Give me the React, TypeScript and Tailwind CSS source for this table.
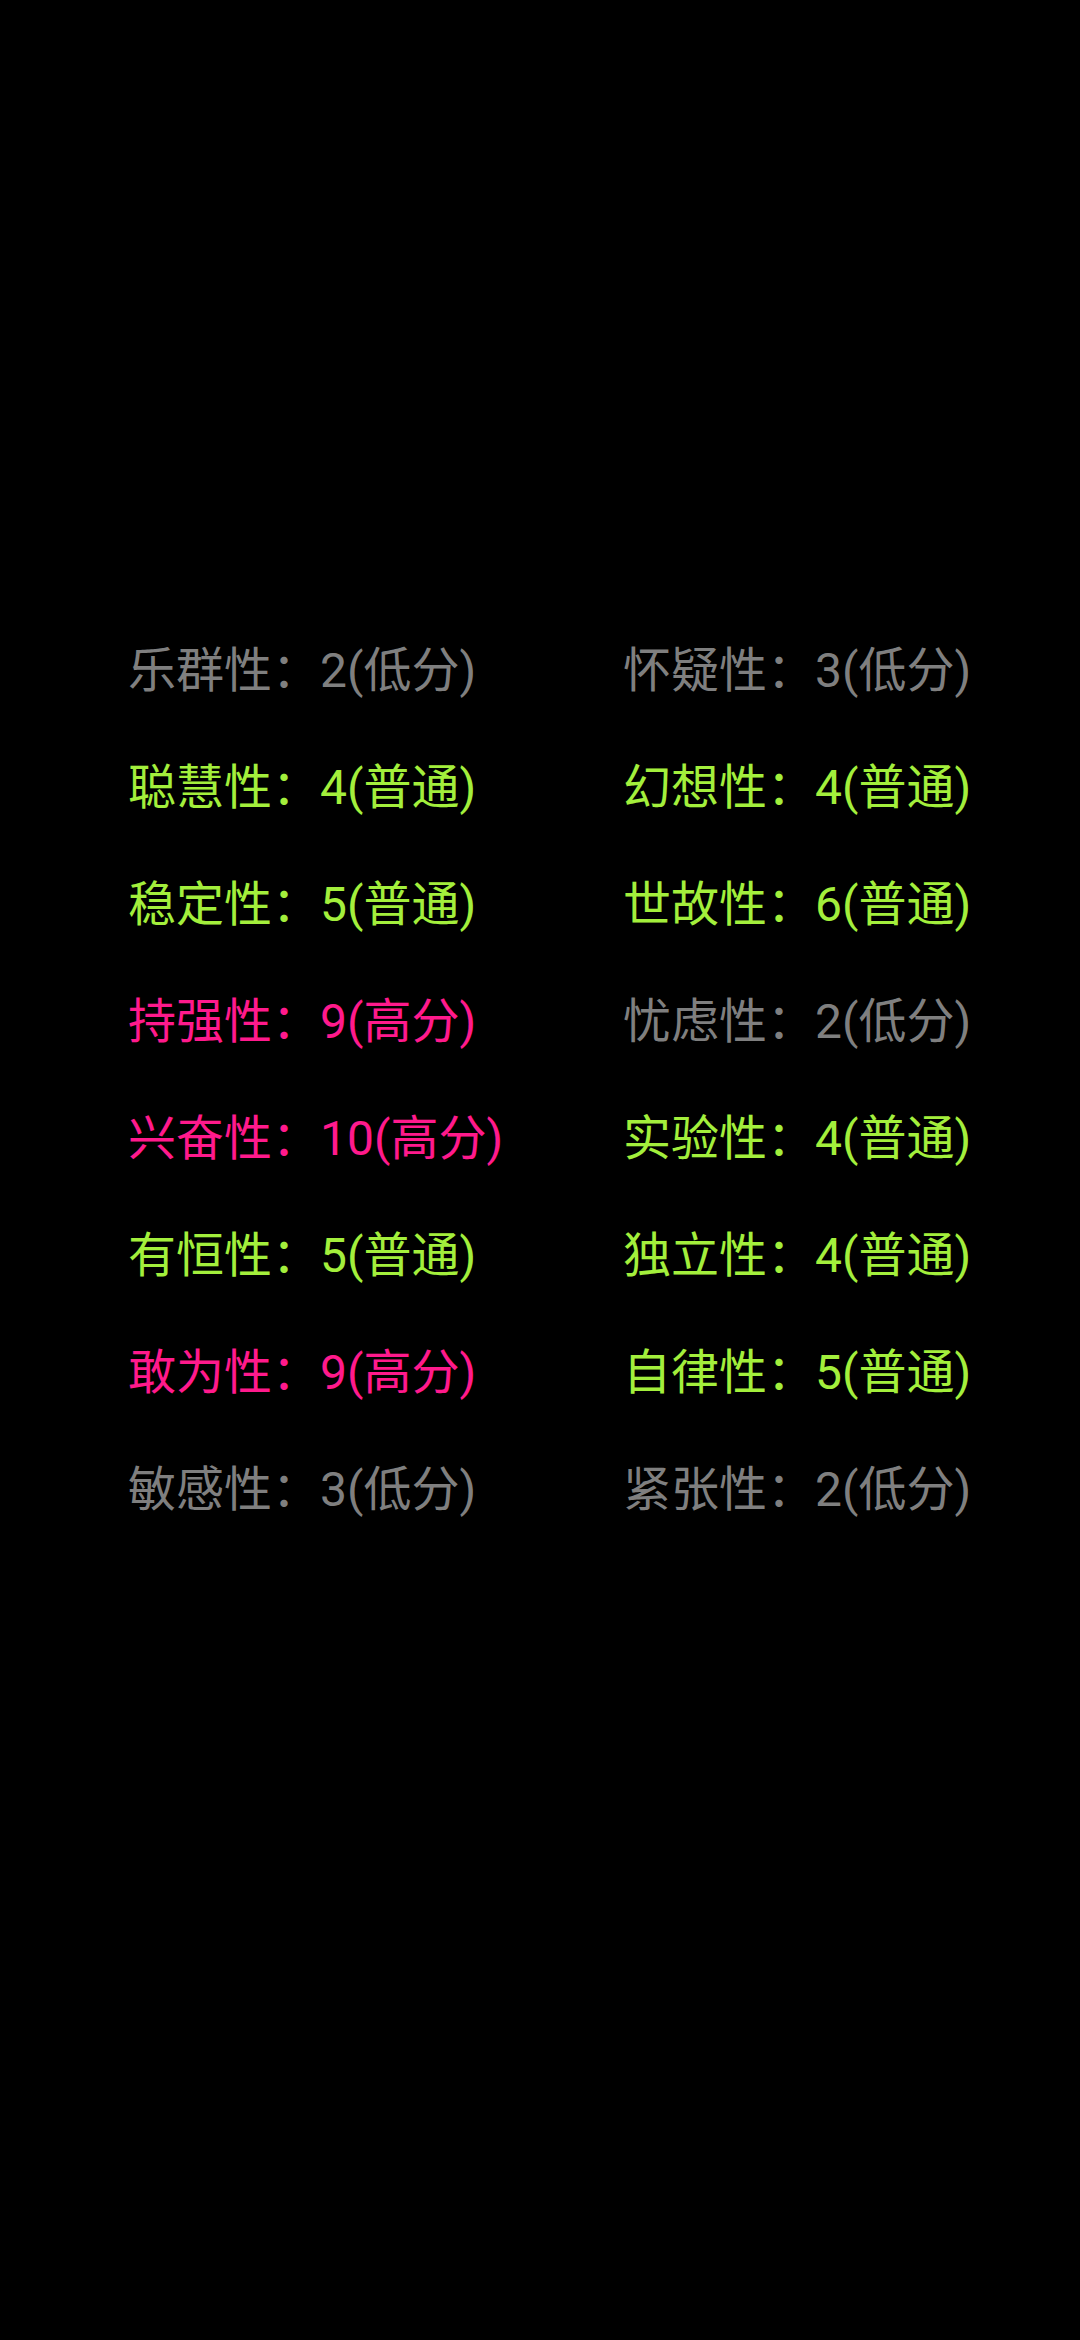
import React from "react";

type Item = { name: string; score: number; level: "低分" | "普通" | "高分" };

const rows: [Item, Item][] = [
  [{ name: "乐群性", score: 2, level: "低分" }, { name: "怀疑性", score: 3, level: "低分" }],
  [{ name: "聪慧性", score: 4, level: "普通" }, { name: "幻想性", score: 4, level: "普通" }],
  [{ name: "稳定性", score: 5, level: "普通" }, { name: "世故性", score: 6, level: "普通" }],
  [{ name: "持强性", score: 9, level: "高分" }, { name: "忧虑性", score: 2, level: "低分" }],
  [{ name: "兴奋性", score: 10, level: "高分" }, { name: "实验性", score: 4, level: "普通" }],
  [{ name: "有恒性", score: 5, level: "普通" }, { name: "独立性", score: 4, level: "普通" }],
  [{ name: "敢为性", score: 9, level: "高分" }, { name: "自律性", score: 5, level: "普通" }],
  [{ name: "敏感性", score: 3, level: "低分" }, { name: "紧张性", score: 2, level: "低分" }],
];

function Cell({ item }: { item: Item }) {
  const color =
    item.level === "低分"
      ? "text-[#7f7f7f]"
      : item.level === "普通"
      ? "text-[#a3ef3c]"
      : "text-[#ff1a8c]";
  return (
    <div className={`w-[495px] shrink-0 ${color} whitespace-nowrap`}>
      {item.name}：{item.score}({item.level})
    </div>
  );
}

export default function App() {
  return (
    <div
      className="w-[1080px] min-h-[2340px] bg-black pt-[612px] pl-[128px]"
      style={{ fontFamily: "Roboto, 'Noto Sans CJK SC', sans-serif" }}
    >
      {rows.map((r, i) => (
        <div key={i} className="flex items-center h-[117px] text-[48px] leading-none">
          <Cell item={r[0]} />
          <Cell item={r[1]} />
        </div>
      ))}
    </div>
  );
}
